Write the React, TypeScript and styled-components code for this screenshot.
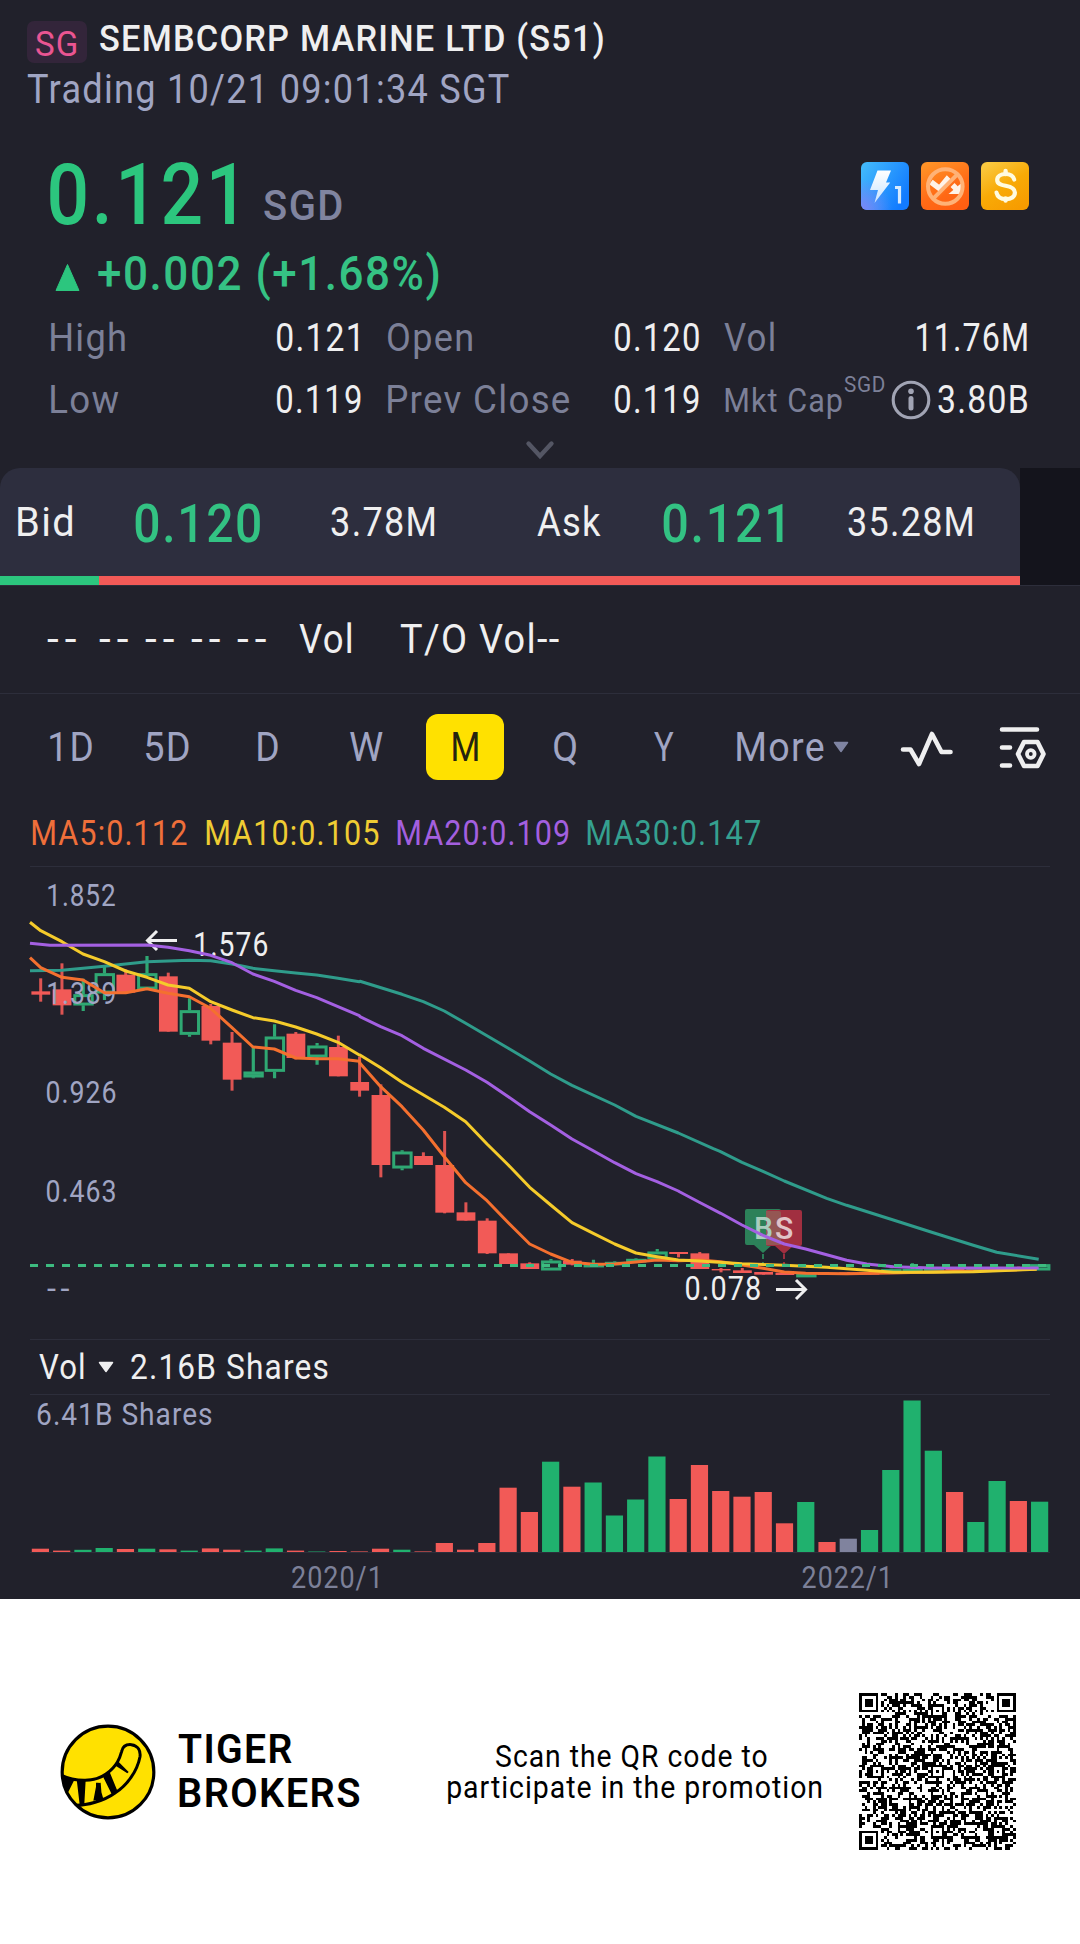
import React from 'react';
import styled, { createGlobalStyle } from 'styled-components';

const C = {
  bg: '#21212b',
  panel: '#2d2e3e',
  line: '#2d2e3b',
  text: '#efeff0',
  soft: '#a0a5c3',
  dim: '#7c8098',
  green: '#2cc67e',
  candleGreen: '#2fa873',
  barGreen: '#20b16e',
  red: '#f25a57',
  yellow: '#ffe100',
};
const FONT = 'Roboto, "Liberation Sans", sans-serif';
const TRACK = 0.035;

const Global = createGlobalStyle`
  body { margin: 0; background: #fff; font-family: ${FONT}; }
  *, *::before, *::after { box-sizing: border-box; }
`;

/* ---------- condensed text ---------- */
const ctx = document.createElement('canvas').getContext('2d')! as CanvasRenderingContext2D & { letterSpacing: string };

function inkOf(text: string, size: number, weight: number, track: number) {
  ctx.font = `${weight} ${size}px ${FONT}`;
  ctx.letterSpacing = '0px';
  const m = ctx.measureText(text);
  return {
    left: -m.actualBoundingBoxLeft,
    width: m.actualBoundingBoxLeft + m.actualBoundingBoxRight + track * size * (text.length - 1),
  };
}

const LabelBox = styled.div<{ $w: number; $h: number; $ml: number; $mt: number }>`
  flex: none;
  width: ${p => p.$w}px;
  height: ${p => p.$h}px;
  line-height: ${p => p.$h}px;
  margin-left: ${p => p.$ml}px;
  margin-top: ${p => p.$mt}px;
`;
const Glyphs = styled.span<{ $size: number; $weight: number; $color: string; $track: number }>`
  display: inline-block;
  vertical-align: top;
  white-space: pre;
  transform-origin: 0 0;
  font-size: ${p => p.$size}px;
  font-weight: ${p => p.$weight};
  letter-spacing: ${p => p.$track}em;
  color: ${p => p.$color};
`;

type LabelProps = {
  children: string; w: number; size: number; weight?: number; color?: string;
  h?: number; ml?: number; mt?: number; track?: number;
};
function Label({ children, w, size, weight = 400, color = C.text, h = 40, ml = 0, mt = 0, track = TRACK }: LabelProps) {
  const ink = inkOf(children, size, weight, track);
  const k = w / ink.width;
  return (
    <LabelBox $w={w} $h={h} $ml={ml} $mt={mt}>
      <Glyphs $size={size} $weight={weight} $color={color} $track={track}
        style={{ transform: `translateX(${-ink.left * k}px) scaleX(${k})` }}>{children}</Glyphs>
    </LabelBox>
  );
}

function ChartText({ x, y, w, size, fill, weight = 400, track = TRACK, children }:
  { x: number; y: number; w: number; size: number; fill: string; weight?: number; track?: number; children: string }) {
  const ink = inkOf(children, size, weight, track);
  const k = w / ink.width;
  return (
    <text transform={`translate(${x - ink.left * k} ${y + size * 0.3555}) scale(${k} 1)`}
      fontFamily={FONT} fontSize={size} fontWeight={weight} letterSpacing={track * size} fill={fill}>{children}</text>
  );
}

/* ---------- layout ---------- */
const Page = styled.div`width: 1080px; height: 1944px; display: flex; flex-direction: column; background: #fff; overflow: hidden;`;
const Screen = styled.main`height: 1599px; background: ${C.bg}; display: flex; flex-direction: column;`;
const Header = styled.header`padding: 21px 0 0 27px;`;
const TitleRow = styled.div`display: flex; align-items: flex-start; height: 42px;`;
const Market = styled.div`
  width: 60px; height: 42px; border-radius: 7px; background: #33253a; display: flex; align-items: center;
  padding: 4px 0 0 9px;
`;
const PriceRow = styled.div`display: flex; align-items: flex-start; height: 72px; margin-top: 51px; padding: 0 51px 0 49px;`;
const Badges = styled.div`display: flex; gap: 12px; margin: 4px 0 0 auto;`;
const ChangeRow = styled.div`display: flex; align-items: flex-start; height: 48px; margin-top: 20px; padding-left: 55px;`;
const Stats = styled.div`
  display: grid; grid-template-columns: 312px 312px 304px; grid-auto-rows: 62px; column-gap: 26px;
  padding: 0 0 0 49px; margin-top: 8.5px;
`;
const Stat = styled.div<{ $pr?: number }>`
  display: flex; justify-content: space-between; align-items: center; padding-right: ${p => p.$pr ?? 0}px;
`;
const CapLabel = styled.div`display: flex; align-items: center;`;
const Expand = styled.div`height: 37.5px; padding-top: 2px; display: flex; align-items: center; justify-content: center;`;
const QuoteWrap = styled.section`height: 118px; display: flex; background: #14141c; border-bottom: 1px solid ${C.line};`;
const QuoteBack = styled.div`width: 1020px; background: ${C.bg};`;
const Quote = styled.div`height: 117px; border-radius: 20px 20px 0 0; background: ${C.panel}; overflow: hidden; display: flex; flex-direction: column;`;
const QuoteRow = styled.div`flex: 1; display: flex; align-items: center; padding-left: 18px;`;
const Ratio = styled.div`height: 9px; display: flex; background: ${C.red};`;
const RatioBid = styled.div`width: 98.5px; background: ${C.green};`;
const InfoRow = styled.div`height: 108px; display: flex; align-items: center; padding: 0 0 2px 47px; border-bottom: 1px solid ${C.line};`;
const Tabs = styled.nav`height: 66px; margin-top: 20px; display: flex; align-items: center; padding: 0 0 0 50px;`;
const ActiveTab = styled.div`width: 78px; height: 66px; margin-left: 43px; border-radius: 12px; background: ${C.yellow}; display: flex; align-items: center; padding-left: 27px;`;
const MaRow = styled.div`height: 67px; margin: 20px 30px 0; display: flex; align-items: center; padding-left: 2px; border-bottom: 1px solid ${C.line};`;
const Icon = styled.svg<{ $ml?: number; $mt?: number }>`display: block; flex: none; margin-left: ${p => p.$ml ?? 0}px; margin-top: ${p => p.$mt ?? 0}px;`;
const Chart = styled.svg`display: block; flex: none;`;
const VolHead = styled.div`height: 56px; margin: 0 30px; display: flex; align-items: center; padding-left: 9px; border-top: 1px solid ${C.line}; border-bottom: 1px solid ${C.line};`;
const Footer = styled.footer`height: 345px; display: flex; align-items: center; padding-left: 60px;`;
const Brand = styled.div`margin-left: 22px; width: 180px;`;
const Promo = styled.div`margin-left: 87px; width: 376px; display: flex; flex-direction: column; align-items: center;`;

/* ---------- candles ---------- */
type Candle = [string, number, number, number, number];
const fromTop = (base: number, rows: Candle[]): Candle[] =>
  rows.map(([c, ...v]) => [c, ...v.map(n => base + n / 3)] as Candle);

const candles: Candle[] = [
  ...fromTop(850, [
    ['r', 385, 424, 434, 455], ['r', 340, 418, 466, 494], ['g', 386, 433, 466, 483], ['g', 345, 370, 430, 450],
    ['r', 358, 374, 428, 432], ['g', 318, 370, 418, 420], ['r', 368, 379, 545, 545], ['g', 445, 481, 554, 560],
    ['r', 462, 468, 572, 583], ['r', 546, 578, 689, 722], ['g', 587, 665, 682, 685], ['g', 523, 560, 665, 685],
    ['r', 546, 551, 624, 628], ['g', 579, 587, 622, 644], ['r', 557, 591, 679, 679], ['r', 620, 696, 722, 740],
  ]),
  ...fromTop(950, [
    ['r', 403, 435, 645, 682], ['g', 601, 605, 655, 661], ['r', 607, 618, 645, 645], ['r', 543, 645, 788, 790],
    ['r', 757, 787, 812, 812], ['r', 805, 812, 910, 912], ['r', 910, 910, 942, 942], ['r', 937, 940, 957, 957],
    ['g', 927, 932, 961, 961], ['r', 927, 932, 944, 946], ['g', 929, 942, 945, 948], ['g', 934, 936, 944, 944],
    ['g', 925, 927, 937, 937], ['g', 897, 905, 927, 927], ['r', 906, 906, 912, 922], ['r', 906, 910, 957, 957],
  ]),
  ...fromTop(1150, [
    ['r', 354, 357, 360, 367], ['r', 354, 361, 369, 369], ['r', 366, 366, 374, 374], ['r', 367, 368, 375, 375],
    ['g', 371, 372, 377, 377], ['r', 368, 369, 375, 375], ['r', 366, 367, 374, 374], ['r', 365, 367, 374, 374],
    ['g', 356, 358, 371, 371], ['g', 340, 357, 364, 366], ['g', 352, 354, 360, 362], ['r', 352, 354, 360, 362],
    ['g', 350, 352, 358, 360], ['g', 350, 352, 358, 360], ['r', 350, 352, 358, 360], ['g', 342, 343, 361, 361],
  ]),
];

const seg = (x0: number, y0: number, v: number[]) => {
  const out: string[] = [];
  for (let i = 0; i < v.length; i += 2) out.push(`${(x0 + v[i] / 3).toFixed(1)},${(y0 + v[i + 1] / 3).toFixed(1)}`);
  return out.join(' ');
};
const path = (a: number[], b: number[], c: number[]) => [seg(0, 850, a), seg(360, 950, b), seg(680, 1150, c)].join(' ');

const ma = [
  { color: '#2f9c8b', points: path(
    [90, 362, 186, 361, 313, 349, 441, 335, 568, 331, 632, 332, 696, 342, 759, 355, 823, 362, 887, 369, 950, 375, 1014, 385, 1078, 395],
    [0, 94, 126, 133, 190, 155, 253, 183, 317, 220, 381, 257, 445, 295, 509, 333, 572, 372, 636, 406, 764, 465, 828, 499, 955, 549, 1060, 596],
    [120, 4, 186, 37, 249, 64, 313, 93, 440, 145, 500, 166, 640, 210, 760, 248, 880, 286, 950, 307, 1076, 328]) },
  { color: '#f4702f', points: path(
    [90, 323, 122, 353, 186, 382, 249, 390, 313, 428, 377, 428, 441, 416, 504, 430, 568, 440, 632, 475, 696, 533, 759, 591, 823, 597, 887, 624, 950, 626, 1014, 626, 1078, 634],
    [0, 340, 62, 410, 126, 470, 190, 540, 253, 620, 317, 698, 381, 752, 445, 818, 509, 882, 572, 912, 636, 937, 700, 943, 764, 942, 828, 936, 891, 930, 955, 932],
    [58, 330, 122, 335, 186, 345, 249, 355, 313, 366, 377, 370, 500, 371, 630, 369, 760, 366, 880, 363, 970, 361, 1070, 357]) },
  { color: '#f5cb2b', points: path(
    [90, 217, 122, 242, 186, 275, 249, 312, 313, 335, 377, 363, 441, 382, 504, 405, 568, 415, 632, 455, 696, 480, 759, 503, 823, 513, 887, 531, 950, 552, 1014, 577, 1078, 615],
    [0, 315, 62, 353, 126, 397, 253, 472, 317, 515, 381, 582, 445, 645, 509, 712, 572, 765, 636, 818, 700, 850, 764, 882, 828, 909, 891, 920, 955, 930],
    [58, 333, 186, 341, 313, 346, 440, 352, 560, 361, 640, 367, 760, 367, 880, 365, 1070, 358]) },
  { color: '#a460e2', points: path(
    [90, 280, 150, 286, 441, 285, 504, 292, 568, 302, 632, 316, 696, 338, 759, 372, 823, 394, 887, 421, 950, 443, 1014, 470, 1078, 497],
    [0, 200, 62, 230, 126, 257, 190, 295, 317, 360, 381, 397, 445, 440, 509, 485, 572, 525, 636, 567, 700, 602, 764, 638, 828, 671, 891, 695, 955, 723],
    [0, 126, 58, 157, 122, 190, 186, 225, 249, 256, 313, 282, 377, 297, 440, 314, 500, 331, 560, 342, 640, 350, 760, 354, 1076, 354]) },
];

const axis: [string, number][] = [['1.852', 895], ['1.389', 993.5], ['0.926', 1092.5], ['0.463', 1191.5]];

function PriceChart() {
  return (
    <Chart width="1080" height="472" viewBox="0 867 1080 472">
      {candles.map(([c, hi, top, bot, lo], i) => {
        const cx = 40.7 + 21.26 * i;
        if (c === 'r') {
          return (
            <g key={i} fill={C.red}>
              <rect x={cx - 1.5} y={hi} width="3" height={Math.max(lo - hi, 1)} opacity=".9" />
              <rect x={cx - 9.3} y={top} width="18.8" height={Math.max(bot - top, 1.4)} />
            </g>
          );
        }
        return (
          <g key={i}>
            <path d={`M${cx} ${hi}V${top}M${cx} ${bot}V${lo}`} stroke={C.candleGreen} strokeWidth="3.2" />
            <rect x={cx - 8.4} y={top + 1.3} width="17.4" height={Math.max(bot - top - 2.6, 0.6)} fill="none"
              stroke={C.candleGreen} strokeWidth="3" />
          </g>
        );
      })}
      {axis.map(([t, y]) => <ChartText key={t} x={t[0] === '1' ? 48 : 46.5} y={y} w={t[0] === '1' ? 67.5 : 69} size={30.5} fill={C.soft}>{t}</ChartText>)}
      <ChartText x={47} y={1288.5} w={22} size={30.5} track={0.14} fill={C.soft}>--</ChartText>
      <g opacity=".85">
        <path d="M747 1209h32q2 0 2 2v32q0 2-2 2h-7l-9 8-9-8h-7q-2 0-2-2v-32q0-2 2-2z" fill="#2e9262" />
        <path d="M768 1210h32q2 0 2 2v32q0 2-2 2h-7l-9 8-9-8h-7q-2 0-2-2v-32q0-2 2-2z" fill="#b83244" />
        <path d="M766 1211h13q2 0 2 2v32h-15z" fill="#a9605a" />
      </g>
      <ChartText x={756} y={1227.5} w={16} size={32} weight={500} fill="#a9cdbd">B</ChartText>
      <ChartText x={776} y={1228} w={17} size={32} weight={500} fill="#e0c3c8">S</ChartText>
      <path d="M763 1254v12" stroke="#2e9262" strokeWidth="1.6" strokeDasharray="5 3" />
      <path d="M784 1254v16" stroke="#b83244" strokeWidth="1.6" strokeDasharray="5 3" />
      <ChartText x={195} y={944} w={72} size={33} fill={C.text}>1.576</ChartText>
      <path d="M177 940.5H148M157 931l-9.5 9.5 9.5 9.5" fill="none" stroke={C.text} strokeWidth="3" />
      {ma.map(m => <polyline key={m.color} points={m.points} fill="none" stroke={m.color} strokeWidth="3" strokeLinejoin="round" />)}
      <path d="M30 1265.5H1050" stroke="#3dbb80" strokeWidth="3" strokeDasharray="8 8" />
      <ChartText x={685.5} y={1288.3} w={74.5} size={32.5} fill={C.text}>0.078</ChartText>
      <path d="M776 1289.5h29M796 1280l9.5 9.5-9.5 9.5" fill="none" stroke={C.text} strokeWidth="3" />
    </Chart>
  );
}

const volumes: [string, number][] = [
  ['r', 3.3], ['r', 1.4], ['g', 2.2], ['g', 4], ['r', 3], ['g', 3.3], ['r', 2.7], ['g', 1.4], ['r', 3.6], ['r', 2.3], ['g', 1.4], ['g', 3.6],
  ['r', 1.4], ['g', 0.5], ['r', 1], ['r', 0.6], ['r', 3.3], ['g', 2.3], ['r', 0.6], ['r', 9], ['r', 2.3], ['r', 9], ['r', 64.3], ['r', 40],
  ['g', 90.3], ['r', 65.3], ['g', 69.5], ['g', 36.5], ['g', 52.5], ['g', 95.5], ['r', 53], ['r', 87], ['r', 61], ['r', 55.3], ['r', 60],
  ['r', 28.7], ['g', 50], ['r', 10], ['n', 13.3], ['g', 22], ['g', 82], ['g', 151.5], ['g', 101.3], ['r', 60], ['g', 30], ['g', 71], ['r', 51], ['g', 50.3],
];
const volColor: Record<string, string> = { r: C.red, g: C.barGreen, n: '#80839e' };

function VolumeChart() {
  return (
    <Chart width="1080" height="204" viewBox="0 1395 1080 204">
      <path d="M30 1552.5H1050" stroke={C.line} />
      {volumes.map(([c, h], i) => <rect key={i} x={31.8 + 21.26 * i} y={1552 - h} width="17.2" height={h} fill={volColor[c]} />)}
      <ChartText x={37} y={1414.5} w={175} size={30.5} fill={C.soft}>6.41B Shares</ChartText>
      <ChartText x={292} y={1577} w={85.5} size={30.5} fill={C.dim}>2020/1</ChartText>
      <ChartText x={802.5} y={1577} w={85} size={30.5} fill={C.dim}>2022/1</ChartText>
    </Chart>
  );
}

/* ---------- icons ---------- */
function FeatureBadges() {
  return (
    <Badges>
      <Icon width="48" height="48" viewBox="0 0 48 48">
        <defs>
          <linearGradient id="b1" x1="0" y1="0" x2="1" y2=".6"><stop offset="0" stopColor="#45bdfb" /><stop offset="1" stopColor="#127bff" /></linearGradient>
          <radialGradient id="b2" cx="0" cy="1" r=".65"><stop offset="0" stopColor="#7f86f5" /><stop offset="1" stopColor="#7f86f5" stopOpacity="0" /></radialGradient>
          <linearGradient id="bolt" x1="0" y1="0" x2="0" y2="1"><stop offset="0" stopColor="#fff" /><stop offset="1" stopColor="#c7e4ff" /></linearGradient>
        </defs>
        <rect width="48" height="48" rx="6" fill="url(#b1)" />
        <rect width="48" height="48" rx="6" fill="url(#b2)" />
        <path d="M16.5 8.5H30L25 20.5h4.2L13.5 41l3.5-13H9z" fill="url(#bolt)" />
        <path d="M34 25.500h4.500v16" fill="none" stroke="#d5eaff" strokeWidth="3.2" />
      </Icon>
      <Icon width="48" height="48" viewBox="0 0 48 48">
        <defs><linearGradient id="o1" x1=".2" y1="0" x2=".7" y2="1"><stop offset="0" stopColor="#ff9327" /><stop offset=".6" stopColor="#ff6b16" /><stop offset="1" stopColor="#ff5f12" /></linearGradient></defs>
        <rect width="48" height="48" rx="6" fill="url(#o1)" />
        <path d="M10 20l8.5 6.500L26 17.500l9 9" fill="none" stroke="#fff3e8" strokeWidth="5.6" />
        <path d="M40.500 21v11H27.500z" fill="#fff3e8" />
        <path d="M13.500 39L39 13.500" stroke="#ff6e1a" strokeWidth="3" />
        <g fill="none" stroke="#ffb276" strokeWidth="4"><circle cx="24.3" cy="24.5" r="17.3" /><path d="M12 36.800L36.600 12.200" /></g>
      </Icon>
      <Icon width="48" height="48" viewBox="0 0 48 48">
        <defs><linearGradient id="y1" x1=".2" y1="0" x2=".8" y2="1"><stop offset="0" stopColor="#fac83f" /><stop offset=".5" stopColor="#f8aa06" /><stop offset="1" stopColor="#f79b00" /></linearGradient></defs>
        <rect width="48" height="48" rx="6" fill="url(#y1)" />
        <path d="M33.200 17.500C32 13.500 28.500 12 24.700 12c-5.200 0-8.500 2.400-8.500 5.900 0 4 3.600 5 8.400 5.900 5 .9 9.300 2.200 9.300 6.800 0 4.200-3.700 6.500-9 6.500-4.800 0-8.400-2-9.400-6.500" fill="none" stroke="#fffbe0" strokeWidth="4.200" strokeLinecap="round" />
        <path d="M24.600 9v3M24.600 36.500v2" stroke="#fffbe0" strokeWidth="4.400" strokeLinecap="round" />
      </Icon>
    </Badges>
  );
}

const QR = 57;
function qrCells() {
  let s = 90210;
  const rnd = () => { s = (s * 1103515245 + 12345) & 0x7fffffff; return (s >> 12) % 100; };
  const align = [6, 28, 50];
  let d = '';
  for (let y = 0; y < QR; y++) for (let x = 0; x < QR; x++) {
    let on = rnd() < 50;
    const ring = (cx: number, cy: number) => Math.max(Math.abs(x - cx), Math.abs(y - cy));
    if (x === 6 || y === 6) on = (x + y) % 2 === 0;
    align.forEach(ax => align.forEach(ay => {
      const nearFinder = (ax === 6 && ay !== 28) || (ay === 6 && ax === 50);
      const r = ring(ax, ay);
      if (!nearFinder && r <= 2) on = r !== 1;
    }));
    [[3, 3], [QR - 4, 3], [3, QR - 4]].forEach(([cx, cy]) => {
      const r = ring(cx, cy);
      if (r <= 4) on = r !== 4 && r !== 2;
    });
    if (on) d += `M${x} ${y}h1v1h-1z`;
  }
  return d;
}
const qrPath = qrCells();

function TigerLogo() {
  return (
    <Icon width="96" height="96" viewBox="60 100 288 288">
      <defs><clipPath id="disc"><circle cx="204" cy="244" r="139" /></clipPath></defs>
      <circle cx="204" cy="244" r="137.5" fill={C.yellow} />
      <g clipPath="url(#disc)">
        <path d="M60 252C110 276 165 274 198 250C232 226 240 200 245 182C249 164 262 161 274 162C296 165 302 182 300 198C292 240 262 284 226 306C190 332 140 344 108 344"
          fill="none" stroke="#000" strokeWidth="9" />
        <path d="M62 252l42 14-24 48zM110 266l27 2-4 72-14 2zM168 276h8l14 48-22 8zM188 256l20-14 24 58-16 12zM222 222l12-10 32 32-4 4zM160 330l10-52 12-2 4 50z" fill="#000" />
      </g>
      <circle cx="204" cy="244" r="137.5" fill="none" stroke="#000" strokeWidth="9.5" />
    </Icon>
  );
}

const F = 38.5;

export default function App() {
  return (
    <Page>
      <Global />
      <Screen>
        <Header>
          <TitleRow>
            <Market><Label w={40} size={34.5} h={36} color="#ea5592">SG</Label></Market>
            <Label w={503} size={37} weight={500} h={36} ml={13}>SEMBCORP MARINE LTD (S51)</Label>
          </TitleRow>
          <Label w={481} size={41} h={35} mt={9} ml={1} color={C.soft}>Trading 10/21 09:01:34 SGT</Label>
        </Header>
        <PriceRow>
          <Label w={184} size={85} weight={500} h={72} mt={1} ml={1} color={C.green}>0.121</Label>
          <Label w={78} size={42} weight={500} h={40} ml={30} mt={27.5} color="#80849f">SGD</Label>
          <FeatureBadges />
        </PriceRow>
        <ChangeRow>
          <Icon width="25" height="29" viewBox="0 0 25 29" $mt={13}><path d="M12.5 1.5L24 27.5H1z" fill={C.green} stroke={C.green} strokeLinejoin="round" /></Icon>
          <Label w={341} size={49} weight={500} h={47} ml={18} color="#35c284">+0.002 (+1.68%)</Label>
        </ChangeRow>
        <Stats>
          <Stat $pr={3}><Label w={74} size={F} ml={1.5} color={C.dim}>High</Label><Label w={81} size={F}>0.121</Label></Stat>
          <Stat><Label w={84} size={F} ml={1} color={C.dim}>Open</Label><Label w={84} size={F}>0.120</Label></Stat>
          <Stat $pr={2}><Label w={50} size={F} color={C.dim} ml={-1}>Vol</Label><Label w={110} size={F}>11.76M</Label></Stat>
          <Stat><Label w={68} size={F} ml={1.5} color={C.dim}>Low</Label><Label w={84} size={F}>0.119</Label></Stat>
          <Stat><Label w={181} size={F} ml={1} color={C.dim}>Prev Close</Label><Label w={84} size={F}>0.119</Label></Stat>
          <Stat $pr={2}>
            <CapLabel>
              <Label w={117} size={34} color={C.dim}>Mkt Cap</Label>
              <Label w={41} size={22} h={24} ml={2} mt={-29} color={C.dim}>SGD</Label>
              <Icon width="40" height="40" viewBox="0 0 40 40" $ml={6}>
                <circle cx="20" cy="20" r="17.8" fill="none" stroke="#a1a4b4" strokeWidth="3.1" />
                <circle cx="20" cy="11.300" r="2.800" fill="#a1a4b4" />
                <path d="M20 18.500v9.500" stroke="#a1a4b4" strokeWidth="5" strokeLinecap="round" />
              </Icon>
            </CapLabel>
            <Label w={89} size={F}>3.80B</Label>
          </Stat>
        </Stats>
        <Expand><Icon width="32" height="20" viewBox="0 0 32 20"><path d="M4.500 3.500L16 16 27.500 3.500" fill="none" stroke="#545664" strokeWidth="4.4" strokeLinecap="round" /></Icon></Expand>
        <QuoteWrap>
          <QuoteBack>
            <Quote>
              <QuoteRow>
                <Label w={54} size={40.5}>Bid</Label>
                <Label w={125} size={54} weight={500} ml={63} mt={4} color="#33c283">0.120</Label>
                <Label w={103} size={40.5} ml={71}>3.78M</Label>
                <Label w={64} size={40.5} ml={103}>Ask</Label>
                <Label w={120} size={54} weight={500} ml={62} mt={4} color="#33c283">0.121</Label>
                <Label w={124} size={40.5} ml={65}>35.28M</Label>
              </QuoteRow>
              <Ratio><RatioBid /></Ratio>
            </Quote>
          </QuoteBack>
        </QuoteWrap>
        <InfoRow>
          <Label w={29} size={41} track={0.14}>--</Label>
          <Label w={29} size={41} track={0.14} ml={23}>--</Label>
          <Label w={29} size={41} track={0.14} ml={17}>--</Label>
          <Label w={29} size={41} track={0.14} ml={17}>--</Label>
          <Label w={29} size={41} track={0.14} ml={17}>--</Label>
          <Label w={52} size={41} ml={33}>Vol</Label>
          <Label w={158} size={41} ml={50}>T/O Vol--</Label>
        </InfoRow>
        <Tabs>
          <Label w={42} size={41} color={C.soft}>1D</Label>
          <Label w={43} size={41} ml={54} color={C.soft}>5D</Label>
          <Label w={20} size={41} ml={69} color={C.soft}>D</Label>
          <Label w={33} size={41} ml={72} color={C.soft}>W</Label>
          <ActiveTab><Label w={25} size={41} color="#25240f">M</Label></ActiveTab>
          <Label w={22} size={41} ml={50} color={C.soft}>Q</Label>
          <Label w={20} size={41} ml={78} color={C.soft}>Y</Label>
          <Label w={87} size={41} ml={63} color={C.soft}>More</Label>
          <Icon width="16" height="12" viewBox="0 0 16 12" $ml={9}><path d="M1.500 1.500h13L8 10.500z" fill="#7f84a2" stroke="#7f84a2" strokeLinejoin="round" strokeWidth="1.5" /></Icon>
          <Icon width="54" height="38" viewBox="0 0 54 38" $ml={51} $mt={4}>
            <path d="M3 19.500h7.500L19 34 32 4 41.500 22h9" fill="none" stroke={C.text} strokeWidth="4.6" strokeLinecap="round" strokeLinejoin="round" />
          </Icon>
          <Icon width="48" height="44" viewBox="0 0 48 44" $ml={45} $mt={2}>
            <g fill="none" stroke={C.text} strokeWidth="4.6" strokeLinecap="round" strokeLinejoin="round">
              <path d="M3 3.500h35M3 21.500h8M3 39.500h8" />
              <path d="M25 16h13.500l6 12-6 12H25l-6-12z" />
              <circle cx="31.800" cy="28" r="3.800" strokeWidth="3.800" />
            </g>
          </Icon>
        </Tabs>
        <MaRow>
          <Label w={155} size={34.5} color="#ef6f3a">MA5:0.112</Label>
          <Label w={173} size={34.5} ml={18.5} color="#efcc33">MA10:0.105</Label>
          <Label w={172} size={34.5} ml={18} color="#a35fdf">MA20:0.109</Label>
          <Label w={173} size={34.5} ml={18.5} color="#35a08f">MA30:0.147</Label>
        </MaRow>
        <PriceChart />
        <VolHead>
          <Label w={44.5} size={34.5}>Vol</Label>
          <Icon width="16" height="12" viewBox="0 0 16 12" $ml={14}><path d="M1.500 1.500h13L8 10.500z" fill={C.text} stroke={C.text} strokeLinejoin="round" strokeWidth="1.5" /></Icon>
          <Label w={197} size={34.5} ml={17.5}>2.16B Shares</Label>
        </VolHead>
        <VolumeChart />
      </Screen>
      <Footer>
        <TigerLogo />
        <Brand>
          <Label w={114} size={40} weight={600} h={44} color="#000">TIGER</Label>
          <Label w={180} size={40} weight={600} h={44} ml={1} color="#000">BROKERS</Label>
        </Brand>
        <Promo>
          <Label w={271} size={31} h={31} ml={-4} color="#000">Scan the QR code to</Label>
          <Label w={374} size={31} h={31} ml={3} color="#000">participate in the promotion</Label>
        </Promo>
        <Icon width="157" height="157" viewBox={`0 0 ${QR} ${QR}`} $ml={37.5}><path d={qrPath} fill="#000" shapeRendering="crispEdges" /></Icon>
      </Footer>
    </Page>
  );
}
